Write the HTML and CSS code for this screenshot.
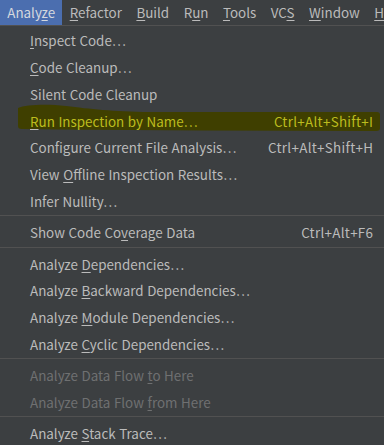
FILE: index.html
```html
<!DOCTYPE html>
<html>
<head>
<meta charset="utf-8">
<link rel="stylesheet" href="styles.css">
</head>
<body>
<div class="menubar">
  <span class="mb-item active">Analy<u>z</u>e</span>
  <span class="mb-item"><u>R</u>efactor</span>
  <span class="mb-item"><u>B</u>uild</span>
  <span class="mb-item">R<u>u</u>n</span>
  <span class="mb-item"><u>T</u>ools</span>
  <span class="mb-item">VC<u>S</u></span>
  <span class="mb-item"><u>W</u>indow</span>
  <span class="mb-item"><u>H</u>elp</span>
</div>
<div class="menu">
  <div class="item"><span class="label"><u>I</u>nspect Code…</span></div>
  <div class="item"><span class="label"><u>C</u>ode Cleanup…</span></div>
  <div class="item"><span class="label">Silent Code Cleanup</span></div>
  <div class="item marked">
    <svg class="marker" viewBox="0 0 384 36" width="384" height="36" aria-hidden="true">
      <path d="M18,8 C26,4.5 48,4 66,6 C90,9 112,11.5 150,12 L377,12 C379,12 380,13 380,15 L380,28 C380,30 379,31 376,31 L200,30.5 L60,29.5 L22,29 C19,29 18,28 18,26 Z" fill="#3f3f00"/>
    </svg>
    <span class="label"><u class="gray">R</u>un Inspection by Name…</span><span class="key">Ctrl+Alt+Shift+I</span>
  </div>
  <div class="item"><span class="label">Configure Current File Analysis…</span><span class="key">Ctrl+Alt+Shift+H</span></div>
  <div class="item"><span class="label">View <u>O</u>ffline Inspection Results…</span></div>
  <div class="item"><span class="label">Infer Nullity…</span></div>
  <div class="sep"></div>
  <div class="item"><span class="label">Show Code Co<u>v</u>erage Data</span><span class="key">Ctrl+Alt+F6</span></div>
  <div class="sep"></div>
  <div class="item"><span class="label">Analyze <u>D</u>ependencies…</span></div>
  <div class="item"><span class="label">Analyze <u>B</u>ackward Dependencies…</span></div>
  <div class="item"><span class="label">Analyze <u>M</u>odule Dependencies…</span></div>
  <div class="item"><span class="label">Analyze <u>C</u>yclic Dependencies…</span></div>
  <div class="sep"></div>
  <div class="item disabled"><span class="label">Analyze Data Flow <u>t</u>o Here</span></div>
  <div class="item disabled"><span class="label">Analyze Data Flow <u>f</u>rom Here</span></div>
  <div class="sep"></div>
  <div class="item"><span class="label">Analyze <u>S</u>tack Trace…</span></div>
</div>
</body>
</html>
```
FILE: styles.css
```css
html, body {
  margin: 0;
  padding: 0;
  background: #3c3f41;
  width: 384px;
  height: 445px;
  overflow: hidden;
}
body {
  font-family: "Noto Sans CJK KR", "Noto Sans", sans-serif;
  font-size: 13.4px;
  word-spacing: 0.6px;
  color: #bbbbbb;
}
u {
  text-decoration: underline;
  text-underline-offset: 2px;
  text-decoration-thickness: 1px;
}
.menubar {
  display: flex;
  height: 25px;
  border-bottom: 1px solid #515151;
  white-space: nowrap;
  overflow: hidden;
}
.mb-item {
  padding: 0 7.25px;
  line-height: 25px;
  flex: none;
}
.mb-item.active {
  background: #4b6eaf;
  color: #d4d8de;
}
.menu {
  padding-top: 0.8px;
}
.item {
  position: relative;
  display: flex;
  justify-content: space-between;
  align-items: center;
  height: 26.8px;
  padding: 0 11px 0 30px;
  white-space: nowrap;
}
.label, .key {
  position: relative;
}
.key {
  letter-spacing: 0.3px;
  margin-right: -0.3px;
}
.item.disabled {
  color: #6f7071;
}
.sep {
  height: 4.5px;
  box-sizing: border-box;
  padding-top: 1px;
}
.sep::before {
  content: "";
  display: block;
  height: 1px;
  background: #515151;
}
.marker {
  position: absolute;
  left: 0;
  top: -7px;
}
.marked {
  color: #bcbc1e;
}
u.gray {
  text-decoration-color: #bbbbbb;
}
```
